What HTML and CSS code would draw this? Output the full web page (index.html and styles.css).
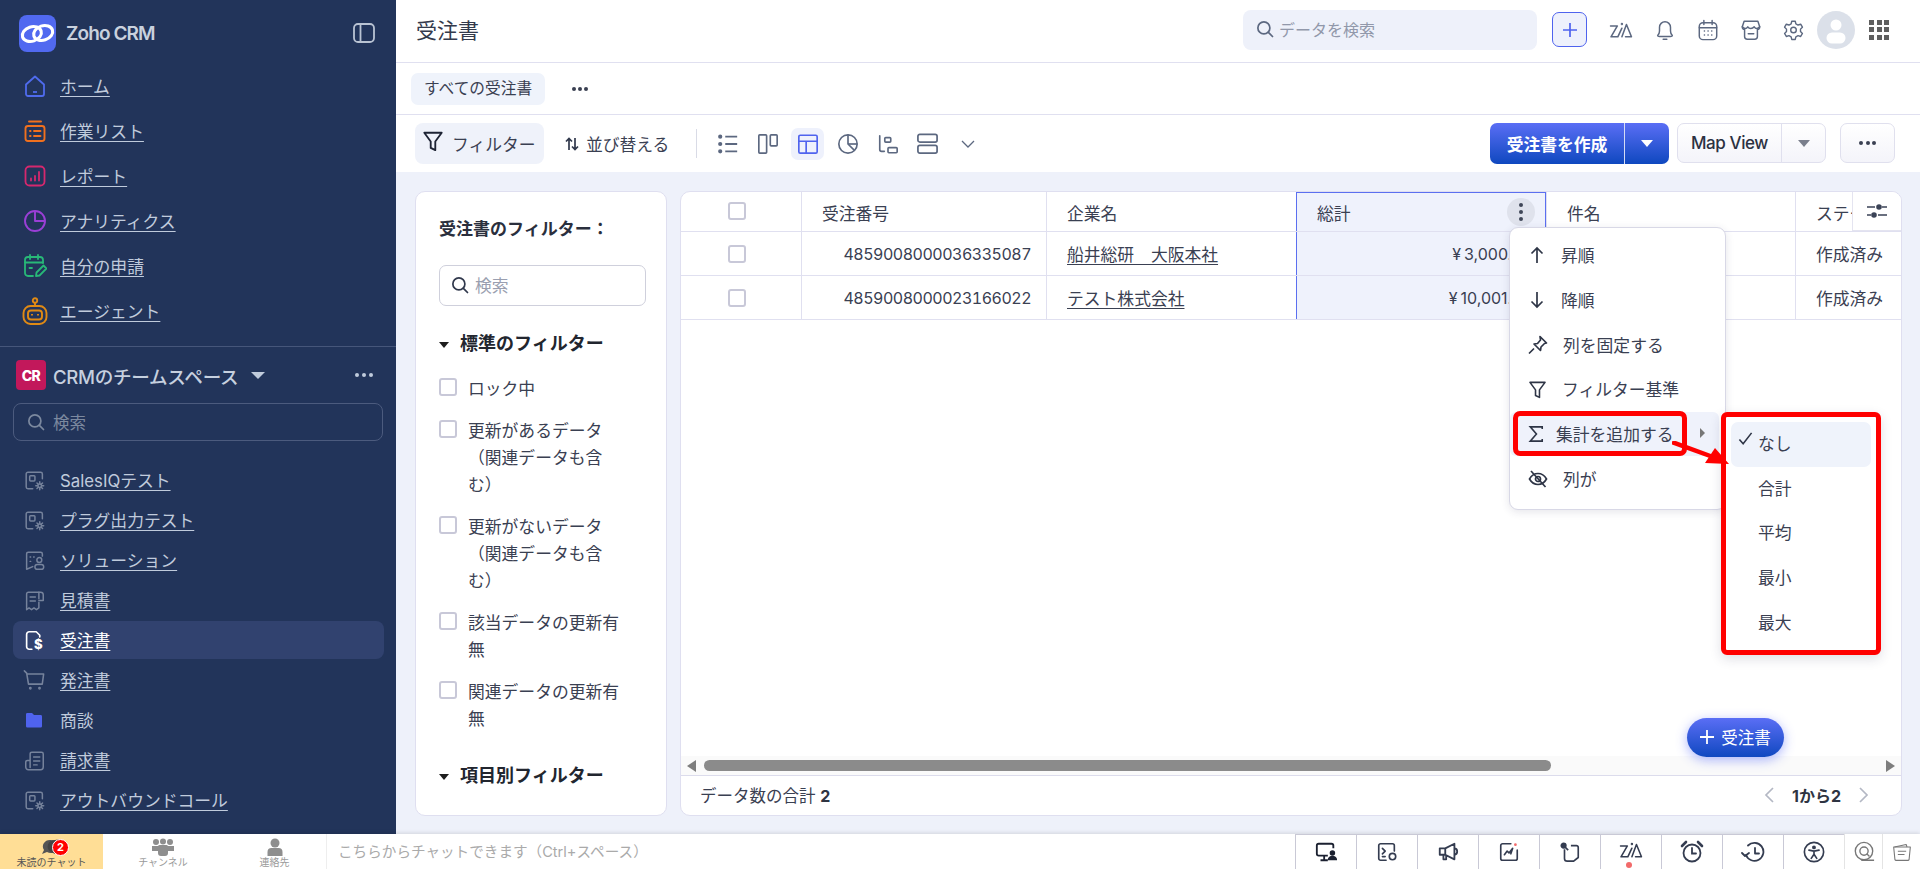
FILE: index.html
```html
<!DOCTYPE html>
<html lang="ja">
<head>
    <meta charset="UTF-8">
    <title>受注書 - Zoho CRM</title>
    <link rel="stylesheet" href="styles.css">
</head>
<body>
    <svg class="sprite" width="0" height="0">
        <symbol id="i-module" viewBox="0 0 24 24" fill="none" stroke="currentColor" stroke-width="1.7" stroke-linecap="round" stroke-linejoin="round">
            <path d="M10 21.5H4.5a2 2 0 0 1-2-2v-15a2 2 0 0 1 2-2h14.500a2 2 0 0 1 2 2V10"/>
            <rect x="6.500" y="6.500" width="6" height="6" rx="1"/>
            <circle cx="18" cy="18" r="2"/>
            <path d="M18 13.500v2M18 20.500v2M13.500 18h2M20.500 18h2M14.800 14.800l1.500 1.500M19.700 19.700l1.500 1.500M14.800 21.200l1.500-1.500M19.700 16.300l1.500-1.500"/>
        </symbol>
        <symbol id="i-search" viewBox="0 0 24 24" fill="none" stroke="currentColor" stroke-width="2.300" stroke-linecap="round">
            <circle cx="10.500" cy="10.500" r="8"/>
            <path d="M16.500 16.500L22 22"/>
        </symbol>
        <symbol id="i-funnel" viewBox="0 0 24 24" fill="none" stroke="currentColor" stroke-width="2" stroke-linejoin="round">
            <path d="M2.500 3h19l-7 9.500V22l-5-2.500v-7z"/>
        </symbol>
        <symbol id="i-zia" viewBox="0 0 26 22" fill="none" stroke="currentColor" stroke-width="1.700" stroke-linejoin="round" stroke-linecap="round">
            <path d="M1.500 6.500H9L2 18.500h7.500L14 9"/>
            <path d="M14 18.500L19 5l5.500 13.500H18"/>
            <circle cx="14" cy="4.500" r=".5"/>
        </symbol>
    </svg>

    <div class="app">
        <aside class="sidebar">
            <div class="brand">
                <span class="brand-logo">
                    <svg viewBox="0 0 36 36" width="37" height="37" fill="none" stroke="#fff" stroke-width="3">
                        <ellipse cx="12.500" cy="18.500" rx="9.500" ry="7" transform="rotate(-18 12.500 18.500)"/>
                        <ellipse cx="23.500" cy="17.500" rx="9.500" ry="7" transform="rotate(-18 23.500 17.500)"/>
                    </svg>
                </span>
                <span class="brand-name">Zoho CRM</span>
                <svg class="brand-toggle" viewBox="0 0 22 20" width="22" height="20" fill="none" stroke="#b9c3d3" stroke-width="1.800">
                    <rect x="1" y="1" width="20" height="18" rx="4"/>
                    <path d="M7.500 1v18"/>
                </svg>
            </div>

            <nav class="main-nav">
                <a class="nav-item"><span class="nav-icon">
                    <svg viewBox="0 0 24 24" width="24" height="24" fill="none" stroke="#4f6bed" stroke-width="1.800" stroke-linejoin="round"><path d="M3 10.500L12 2.500l9 8V20a2 2 0 0 1-2 2H5a2 2 0 0 1-2-2z"/><path d="M10 18h4"/></svg>
                </span>ホーム</a>
                <a class="nav-item"><span class="nav-icon">
                    <svg viewBox="0 0 24 24" width="24" height="24" fill="none" stroke="#f0701e" stroke-width="1.900" stroke-linecap="round"><path d="M6 2.500h12"/><rect x="2.500" y="7" width="19" height="15" rx="2.500"/><path d="M7 12h.6M11 12h6.500M7 17h.6M11 17h6.500"/></svg>
                </span>作業リスト</a>
                <a class="nav-item"><span class="nav-icon">
                    <svg viewBox="0 0 24 24" width="24" height="24" fill="none" stroke="#d6286e" stroke-width="1.800" stroke-linecap="round"><rect x="2.500" y="2.500" width="19" height="19" rx="4"/><path d="M8 16.500v-2M12 16.500v-4.500M16 16.500V8"/></svg>
                </span>レポート</a>
                <a class="nav-item"><span class="nav-icon">
                    <svg viewBox="0 0 24 24" width="24" height="24" fill="none" stroke="#9a3fd6" stroke-width="1.900" stroke-linejoin="round"><circle cx="12" cy="12" r="10"/><path d="M12 2v10h10"/></svg>
                </span>アナリティクス</a>
                <a class="nav-item"><span class="nav-icon">
                    <svg viewBox="0 0 24 24" width="24" height="24" fill="none" stroke="#28b878" stroke-width="1.800" stroke-linecap="round" stroke-linejoin="round"><path d="M10 22H5a3 3 0 0 1-3-3V6a3 3 0 0 1 3-3h12a3 3 0 0 1 3 3v3"/><path d="M2 8.500h18M7 1v4M15 1v4M6.500 14h2.500"/><path d="M13 22l.5-3.500 7-7 3 3-7 7z"/></svg>
                </span>自分の申請</a>
                <a class="nav-item"><span class="nav-icon">
                    <svg viewBox="0 0 26 28" width="26" height="28" fill="none" stroke="#e08a14" stroke-width="1.900"><circle cx="13" cy="3.500" r="2.200"/><path d="M13 6v3"/><rect x="1.500" y="9" width="23" height="18" rx="7"/><rect x="6" y="13.500" width="14" height="9" rx="3"/><path d="M10 17v1.500M16 17v1.500"/></svg>
                </span>エージェント</a>
            </nav>

            <div class="workspace">
                <span class="ws-badge">CR</span>
                <span class="ws-name">CRMのチームスペース</span>
                <span class="ws-caret"></span>
                <span class="ws-more"><i></i><i></i><i></i></span>
            </div>
            <div class="side-search">
                <svg width="18" height="18"><use href="#i-search"/></svg>
                <span>検索</span>
            </div>

            <nav class="module-nav">
                <a class="module-item"><span class="nav-icon"><svg width="21" height="21"><use href="#i-module"/></svg></span>SalesIQテスト</a>
                <a class="module-item"><span class="nav-icon"><svg width="21" height="21"><use href="#i-module"/></svg></span>プラグ出力テスト</a>
                <a class="module-item"><span class="nav-icon">
                    <svg viewBox="0 0 24 24" width="21" height="21" fill="none" stroke="currentColor" stroke-width="1.700" stroke-linecap="round" stroke-linejoin="round"><path d="M10 19l-7 3V4.500a2 2 0 0 1 2-2h14a2 2 0 0 1 2 2V7"/><path d="M7 8h.6M7 13h.6M11 8h.6"/><circle cx="17.500" cy="11.500" r="2.800"/><rect x="12.500" y="16.500" width="10" height="5.500" rx="2.700"/></svg>
                </span>ソリューション</a>
                <a class="module-item"><span class="nav-icon">
                    <svg viewBox="0 0 24 24" width="21" height="21" fill="none" stroke="currentColor" stroke-width="1.700" stroke-linecap="round" stroke-linejoin="round"><path d="M17 10V2.500H5a2 2 0 0 0-2 2v18l2.800-2 2.800 2 2.800-2 2.800 2 2.800-2V14"/><path d="M17 2.500h2a3 3 0 0 1 3 3V12h-5"/><path d="M7 8h6M7 12.500h6"/></svg>
                </span>見積書</a>
                <a class="module-item is-active"><span class="nav-icon">
                    <svg viewBox="0 0 24 24" width="21" height="21" fill="none" stroke="#fff" stroke-width="1.900" stroke-linecap="round" stroke-linejoin="round"><path d="M9 22H6a3 3 0 0 1-3-3V5a3 3 0 0 1 3-3h8l4 4v2"/><text class="dollar" x="11.500" y="22">$</text></svg>
                </span>受注書</a>
                <a class="module-item"><span class="nav-icon">
                    <svg viewBox="0 0 24 24" width="22" height="22" fill="none" stroke="currentColor" stroke-width="1.700" stroke-linecap="round" stroke-linejoin="round"><path d="M1.500 2L4 4.500 6 16.500h15l1.500-11H4.500"/><circle cx="8" cy="21" r=".7"/><circle cx="18" cy="21" r=".7"/></svg>
                </span>発注書</a>
                <a class="module-item is-plain"><span class="nav-icon">
                    <svg viewBox="0 0 20 18" width="18" height="16" fill="#4f63ee"><path d="M1 2.500A1.500 1.500 0 0 1 2.500 1h5.300l2.200 2.500h7.500A1.500 1.500 0 0 1 19 5v11a1.500 1.500 0 0 1-1.500 1.500h-15A1.500 1.500 0 0 1 1 16z"/></svg>
                </span>商談</a>
                <a class="module-item"><span class="nav-icon">
                    <svg viewBox="0 0 24 24" width="21" height="21" fill="none" stroke="currentColor" stroke-width="1.700" stroke-linecap="round" stroke-linejoin="round"><path d="M7 12V4.500a2 2 0 0 1 2-2h11a2 2 0 0 1 2 2v15a3 3 0 0 1-3 3H5a3 3 0 0 1-3-3V14a2 2 0 0 1 2-2h3v8"/><path d="M11 8h7M11 12.500h7M11 17h4"/></svg>
                </span>請求書</a>
                <a class="module-item"><span class="nav-icon"><svg width="21" height="21"><use href="#i-module"/></svg></span>アウトバウンドコール</a>
            </nav>
        </aside>

        <main class="main">
            <header class="topbar">
                <h1 class="page-title">受注書</h1>
                <div class="top-search">
                    <svg width="18" height="18"><use href="#i-search"/></svg>
                    <span>データを検索</span>
                </div>
                <button class="top-add">
                    <svg viewBox="0 0 16 16" width="16" height="16" stroke="#4f63ee" stroke-width="1.700"><path d="M8 1v14M1 8h14"/></svg>
                </button>
                <svg class="top-icon zia" width="24" height="20"><use href="#i-zia"/></svg>
                <svg class="top-icon" viewBox="0 0 24 24" width="22" height="24" fill="none" stroke="#5c6880" stroke-width="1.600" stroke-linecap="round" stroke-linejoin="round"><path d="M4 18c1.500-1.500 2-2.500 2-5V9a6 6 0 0 1 12 0v4c0 2.500.5 3.500 2 5 0 .5-1 1-2 1H6c-1 0-2-.5-2-1z"/><path d="M10 22h4"/></svg>
                <svg class="top-icon" viewBox="0 0 24 24" width="22" height="24" fill="none" stroke="#5c6880" stroke-width="1.600" stroke-linecap="round"><rect x="2.500" y="4" width="19" height="18.500" rx="4"/><path d="M2.500 9.500h19M7.500 1.500V6M16.500 1.500V6M8 13h.2M12 13h.2M16 13h.2M8 17.500h.2M12 17.500h.2M16 17.500h.2"/></svg>
                <svg class="top-icon" viewBox="0 0 24 24" width="22" height="24" fill="none" stroke="#5c6880" stroke-width="1.600" stroke-linecap="round" stroke-linejoin="round"><path d="M4.500 2.500h15l2 6c0 2-1.500 3-2.500 3v7.500a3 3 0 0 1-3 3H8a3 3 0 0 1-3-3v-7.500c-1 0-2.500-1-2.500-3z"/><path d="M2.500 8.500c2 2.500 4.500 2.500 6 0 1.500 2.500 5 2.500 7 0 1.500 2.500 4 2.500 6 0M9 16h6"/></svg>
                <svg class="top-icon" viewBox="0 0 24 24" width="21" height="24" fill="none" stroke="#5c6880" stroke-width="1.600" stroke-linejoin="round"><path d="M10 2h4l.7 3 2.500 1.300 3-.9 2 3.400-2.200 2.200v2.800l2.200 2.200-2 3.400-3-.9-2.500 1.300-.7 3h-4l-.7-3-2.500-1.300-3 .9-2-3.400 2.200-2.200v-2.800L1.800 8.800l2-3.400 3 .9L9.300 5z"/><circle cx="12" cy="12" r="3.200"/></svg>
                <span class="avatar">
                    <svg viewBox="0 0 38 38" width="38" height="38" fill="#fff"><circle cx="19" cy="14" r="5.500"/><rect x="9.500" y="21.500" width="19" height="11" rx="5.500"/></svg>
                </span>
                <span class="app-grid"><i></i><i></i><i></i><i></i><i></i><i></i><i></i><i></i><i></i></span>
            </header>

            <div class="tabs">
                <span class="tab-chip">すべての受注書</span>
                <span class="tab-more"><i></i><i></i><i></i></span>
            </div>

            <div class="toolbar">
                <button class="filter-btn">
                    <svg width="22" height="22" class="filter-funnel"><use href="#i-funnel"/></svg>
                    フィルター
                </button>
                <button class="sort-btn">
                    <svg viewBox="0 0 16 16" width="16" height="16" fill="none" stroke="#30384c" stroke-width="1.700"><path d="M5 14V3M2 5.500L5 2.500l3 3M11 2v11M8 10.500l3 3 3-3"/></svg>
                    並び替える
                </button>
                <span class="tool-divider"></span>
                <span class="view-icon">
                    <svg viewBox="0 0 24 24" width="22" height="22" fill="none" stroke="#5c6880" stroke-width="2"><path d="M9 4h13M9 12h13M9 20h13"/><circle cx="3.500" cy="4" r="1.300" fill="#5c6880"/><circle cx="3.500" cy="12" r="1.300" fill="#5c6880"/><circle cx="3.500" cy="20" r="1.300" fill="#5c6880"/></svg>
                </span>
                <span class="view-icon">
                    <svg viewBox="0 0 24 24" width="22" height="22" fill="none" stroke="#5c6880" stroke-width="1.800"><rect x="2" y="2" width="8.500" height="20" rx="1"/><rect x="14.500" y="2" width="7.500" height="12" rx="1"/></svg>
                </span>
                <span class="view-icon is-active">
                    <svg viewBox="0 0 24 24" width="22" height="22" fill="none" stroke="#4f63ee" stroke-width="1.800"><rect x="2" y="2.500" width="20" height="19.500" rx="1.500"/><path d="M2 9h20M10 9v13"/></svg>
                </span>
                <span class="view-icon">
                    <svg viewBox="0 0 24 24" width="22" height="22" fill="none" stroke="#5c6880" stroke-width="1.800"><circle cx="12" cy="12" r="10"/><path d="M12 2v10l7 7"/><path d="M12 12h10"/></svg>
                </span>
                <span class="view-icon">
                    <svg viewBox="0 0 24 24" width="22" height="22" fill="none" stroke="#5c6880" stroke-width="1.800" stroke-linecap="round"><path d="M3 3v15a2 2 0 0 0 2 2h3"/><rect x="8.500" y="5" width="6.500" height="5" rx="1"/><rect x="12" y="16" width="10" height="5.500" rx="1"/></svg>
                </span>
                <span class="view-icon">
                    <svg viewBox="0 0 24 24" width="23" height="23" fill="none" stroke="#5c6880" stroke-width="1.800"><rect x="2" y="2.500" width="20" height="8" rx="2"/><rect x="2" y="14" width="20" height="8" rx="2"/></svg>
                </span>
                <span class="view-icon">
                    <svg viewBox="0 0 16 16" width="16" height="16" fill="none" stroke="#5c6880" stroke-width="1.300"><path d="M2 5l6 6 6-6"/></svg>
                </span>

                <div class="tool-right">
                    <div class="create-btn">
                        <span class="create-label">受注書を作成</span>
                        <span class="create-caret"></span>
                    </div>
                    <div class="map-btn">
                        <span class="map-label">Map View</span>
                        <span class="map-caret"></span>
                    </div>
                    <button class="more-btn"><i></i><i></i><i></i></button>
                </div>
            </div>

            <div class="content">
                <section class="filter-panel">
                    <h2 class="filter-title">受注書のフィルター：</h2>
                    <div class="filter-search">
                        <svg width="18" height="18"><use href="#i-search"/></svg>
                        <span>検索</span>
                    </div>
                    <h3 class="filter-head">標準のフィルター</h3>
                    <label class="filter-item"><span class="check"></span><span class="filter-text">ロック中</span></label>
                    <label class="filter-item"><span class="check"></span><span class="filter-text">更新があるデータ（関連データも含む）</span></label>
                    <label class="filter-item"><span class="check"></span><span class="filter-text">更新がないデータ（関連データも含む）</span></label>
                    <label class="filter-item"><span class="check"></span><span class="filter-text">該当データの更新有無</span></label>
                    <label class="filter-item"><span class="check"></span><span class="filter-text">関連データの更新有無</span></label>
                    <h3 class="filter-head is-last">項目別フィルター</h3>
                </section>

                <section class="table-card">
                    <div class="row row-head">
                        <div class="cell cell-check"><span class="check"></span></div>
                        <div class="cell">受注番号</div>
                        <div class="cell">企業名</div>
                        <div class="cell cell-total cell-total-top">総計<span class="col-menu"><i></i><i></i><i></i></span></div>
                        <div class="cell">件名</div>
                        <div class="cell">ステータス</div>
                    </div>
                    <div class="row">
                        <div class="cell cell-check"><span class="check"></span></div>
                        <div class="cell cell-num">4859008000036335087</div>
                        <div class="cell"><a class="link">船井総研　大阪本社</a></div>
                        <div class="cell cell-total cell-money"><span class="yen">¥</span>3,000.00</div>
                        <div class="cell"></div>
                        <div class="cell">作成済み</div>
                    </div>
                    <div class="row">
                        <div class="cell cell-check"><span class="check"></span></div>
                        <div class="cell cell-num">4859008000023166022</div>
                        <div class="cell"><a class="link">テスト株式会社</a></div>
                        <div class="cell cell-total cell-total-end cell-money"><span class="yen">¥</span>10,001.00</div>
                        <div class="cell"></div>
                        <div class="cell">作成済み</div>
                    </div>
                    <div class="table-empty"></div>
                    <div class="h-scroll">
                        <span class="arrow-left"></span>
                        <span class="h-track"><span class="h-thumb"></span></span>
                        <span class="arrow-right"></span>
                    </div>
                    <div class="table-foot">
                        <span>データ数の合計 <b>2</b></span>
                        <span class="pager">
                            <svg viewBox="0 0 12 18" width="12" height="18" fill="none" stroke="#b4b8c4" stroke-width="1.700"><path d="M10 2L3 9l7 7"/></svg>
                            <b>1から2</b>
                            <svg viewBox="0 0 12 18" width="12" height="18" fill="none" stroke="#b4b8c4" stroke-width="1.700"><path d="M2 2l7 7-7 7"/></svg>
                        </span>
                    </div>
                    <button class="col-settings">
                        <svg viewBox="0 0 20 16" width="20" height="16" fill="none" stroke="#3a4256" stroke-width="1.600"><path d="M0 4h8M15 4h5M0 12h4M11 12h9"/><circle cx="12" cy="4" r="2" fill="#3a4256"/><circle cx="7" cy="12" r="2" fill="#3a4256"/></svg>
                    </button>
                    <button class="fab">
                        <svg viewBox="0 0 14 14" width="14" height="14" stroke="#fff" stroke-width="1.800"><path d="M7 0v14M0 7h14"/></svg>
                        受注書
                    </button>
                </section>
            </div>
        </main>
    </div>

    <footer class="chatbar">
        <div class="chat-tab is-unread">
            <svg viewBox="0 0 24 16" width="24" height="16" fill="#555"><path d="M10 1a7 6.500 0 0 0-6 10L2 15l5-2a7 6.500 0 1 0 3-12z"/><path d="M15 1a7 6.500 0 0 0-4 12l4 2 .5-2a7 6.500 0 1 0-.5-12z" fill="#444"/></svg>
            <span class="chat-count">2</span>
            未読のチャット
        </div>
        <div class="chat-tab is-channel">
            <svg viewBox="0 0 24 18" width="24" height="18" fill="#8e8e8e"><circle cx="5" cy="4" r="3"/><circle cx="12" cy="3.500" r="3"/><circle cx="19" cy="4" r="3"/><path d="M1 8h6v5H1zM17 8h6v5h-6z"/><path d="M7 8a2 2 0 0 1 2-1h6a2 2 0 0 1 2 1v7a3 3 0 0 1-3 3h-4a3 3 0 0 1-3-3z"/></svg>
            チャンネル
        </div>
        <div class="chat-tab">
            <svg viewBox="0 0 18 18" width="18" height="18" fill="#8e8e8e"><circle cx="9" cy="5" r="4.500"/><path d="M1.500 14a4 4 0 0 1 4-4h7a4 4 0 0 1 4 4v4h-15z"/></svg>
            連絡先
        </div>
        <div class="chat-input">こちらからチャットできます（Ctrl+スペース）</div>
        <div class="dock">
            <span class="dock-cell"><svg viewBox="0 0 24 24" width="22" height="22" fill="none" stroke="#1b2030" stroke-width="2"><path d="M14 16H4a2 2 0 0 1-2-2V5a2 2 0 0 1 2-2h14a2 2 0 0 1 2 2v3M10 16v5M6 21h8"/><circle cx="19" cy="13" r="2" fill="#1b2030"/><path d="M15 20a4 3 0 0 1 8 0z" fill="#1b2030"/></svg></span>
            <span class="dock-cell"><svg viewBox="0 0 24 24" width="22" height="22" fill="none" stroke="#343c50" stroke-width="1.800" stroke-linecap="round" stroke-linejoin="round"><path d="M11 21H5a2 2 0 0 1-2-2V5a2 2 0 0 1 2-2h13a2 2 0 0 1 2 2v6"/><path d="M7 8l3 3-3 3M7 17h3"/><circle cx="18" cy="17" r="3.500"/></svg></span>
            <span class="dock-cell"><svg viewBox="0 0 24 24" width="22" height="22" fill="none" stroke="#343c50" stroke-width="2" stroke-linejoin="round"><path d="M3 8h6l10-5v17L9 15H3zM9 8v7M7 15v5h3v-5M19 8c2 0 3 1.500 3 3.500s-1 3.500-3 3.500"/></svg></span>
            <span class="dock-cell"><svg viewBox="0 0 24 24" width="22" height="22" fill="none" stroke="#343c50" stroke-width="1.800" stroke-linecap="round" stroke-linejoin="round"><path d="M14 3H5a2 2 0 0 0-2 2v14a2 2 0 0 0 2 2h14a2 2 0 0 0 2-2v-9"/><path d="M7 15l3-4 2 2 4-5-2 6"/><circle cx="19" cy="4" r="1.500" fill="#f26a6a" stroke="none"/></svg></span>
            <span class="dock-cell"><svg viewBox="0 0 24 24" width="22" height="22" fill="none" stroke="#343c50" stroke-width="1.800" stroke-linejoin="round"><path d="M6 9v10a3 3 0 0 0 3 3h7l5-4V7a2 2 0 0 0-2-2h-6"/><path d="M5 5l5 5"/><circle cx="5" cy="5" r="2.500" fill="#343c50"/></svg></span>
            <span class="dock-cell dock-zia"><svg width="24" height="20"><use href="#i-zia"/></svg><i class="zia-dot"></i></span>
            <span class="dock-cell"><svg viewBox="0 0 24 24" width="24" height="24" fill="none" stroke="#343c50" stroke-width="1.800" stroke-linecap="round"><circle cx="12" cy="13" r="8.500"/><path d="M12 8v5.500h4"/><path d="M2 6l4-4M22 6l-4-4" stroke-width="2.600"/></svg></span>
            <span class="dock-cell"><svg viewBox="0 0 24 24" width="24" height="24" fill="none" stroke="#343c50" stroke-width="1.800" stroke-linecap="round" stroke-linejoin="round"><path d="M5 15a9 9 0 1 0 2-9.500"/><path d="M14 8v5.500h4"/><path d="M1 13l3 3 4-3"/></svg></span>
            <span class="dock-cell"><svg viewBox="0 0 24 24" width="22" height="22" fill="none" stroke="#343c50" stroke-width="1.800" stroke-linecap="round" stroke-linejoin="round"><circle cx="12" cy="12" r="10.500"/><circle cx="12" cy="7" r="1.200" fill="#343c50"/><path d="M6.500 10l5.500 1 5.500-1M12 11v3.500l-3 4.500M12 14.500l3 4.500"/></svg></span>
            <span class="dock-cell dock-light"><svg viewBox="0 0 24 24" width="22" height="22" fill="none" stroke="#777" stroke-width="1.500"><circle cx="12" cy="11" r="9.500"/><circle cx="12" cy="11" r="4.500"/><path d="M15 14l3 3M9 21h14"/></svg></span>
            <span class="dock-cell dock-light"><svg viewBox="0 0 24 24" width="20" height="20" fill="none" stroke="#777" stroke-width="1.300" stroke-linejoin="round"><path d="M3 6l14-3 1 3"/><path d="M2 6h20l-1.500 15a1.500 1.500 0 0 1-1.500 1H5a1.500 1.500 0 0 1-1.500-1z"/><path d="M7 11h10M7 15h8"/></svg></span>
        </div>
    </footer>

    <!-- dropdown del menu de columna -->
    <div class="col-dropdown">
        <div class="drop-item">
            <svg viewBox="0 0 18 18" width="18" height="18" fill="none" stroke="#2e3546" stroke-width="1.700"><path d="M9 17V2M3.500 7.500L9 2l5.500 5.500"/></svg>
            昇順
        </div>
        <div class="drop-item">
            <svg viewBox="0 0 18 18" width="18" height="18" fill="none" stroke="#2e3546" stroke-width="1.700"><path d="M9 1v15M3.500 10.500L9 16l5.500-5.500"/></svg>
            降順
        </div>
        <div class="drop-item">
            <svg viewBox="0 0 20 20" width="20" height="20" fill="none" stroke="#2e3546" stroke-width="1.700" stroke-linejoin="round"><path d="M12 1.500l6.500 6.500-2 .5-3.500 3.500-.5 3.500-6.500-6.500 3.500-.5 3-3.500zM6 13.500l-5 5"/></svg>
            列を固定する
        </div>
        <div class="drop-item">
            <svg width="19" height="19"><use href="#i-funnel"/></svg>
            フィルター基準
        </div>
        <div class="drop-item is-hover">
            <svg viewBox="0 0 18 20" width="16" height="20" fill="none" stroke="#2e3546" stroke-width="1.800"><path d="M16 4.500V2H2.500L9.500 10l-7 8H16v-2.500"/></svg>
            集計を追加する
            <span class="drop-arrow"></span>
        </div>
        <div class="drop-item">
            <svg viewBox="0 0 20 20" width="20" height="20" fill="none" stroke="#2e3546" stroke-width="1.700"><path d="M1.500 10c2-3.500 5-5.500 8.500-5.500s6.500 2 8.500 5.500c-2 3.500-5 5.500-8.500 5.500S3.500 13.500 1.500 10z"/><circle cx="10" cy="10" r="2.500"/><path d="M3 2l14.500 16"/></svg>
            列が
        </div>
    </div>

    <div class="sub-dropdown">
        <div class="sub-item is-selected">
            <svg viewBox="0 0 16 16" width="15" height="15" fill="none" stroke="#2e3546" stroke-width="1.700"><path d="M1.500 9l4 4.500L14.500 2"/></svg>
            なし
        </div>
        <div class="sub-item">合計</div>
        <div class="sub-item">平均</div>
        <div class="sub-item">最小</div>
        <div class="sub-item">最大</div>
    </div>

    <!-- anotaciones rojas encima del screenshot -->
    <div class="mark-row"></div>
    <svg class="mark-arrow" viewBox="0 0 60 26" width="60" height="26">
        <path d="M0 1l41 15" stroke="#f00" stroke-width="4.500" fill="none"/>
        <path d="M33 22l24 1-14-16z" fill="#f00"/>
    </svg>
</body>
</html>
```

FILE: styles.css
```css
* {
    box-sizing: border-box;
}

html, body {
    margin: 0;
    height: 100%;
    overflow: hidden;
}

body {
    display: flex;
    flex-direction: column;
    font-family: "Inter", "Noto Sans CJK JP", sans-serif;
    font-size: 16.5px;
    color: #3a4052;
    background: #fff;
}

button {
    font: inherit;
    color: inherit;
    background: none;
    border: none;
    padding: 0;
}

.sprite {
    position: absolute;
}

.app {
    flex: 1;
    display: flex;
    min-height: 0;
}

/* Sidebar */
.sidebar {
    width: 396px;
    flex: none;
    background: #22345a;
    color: #c0cbdc;
}

.brand {
    display: flex;
    align-items: center;
    height: 63px;
    padding: 3px 21px 0 19px;
}

.brand-logo {
    width: 37px;
    height: 37px;
    border-radius: 8px;
    background: #5169f0;
    display: flex;
}

.brand-name {
    margin-left: 10px;
    font-size: 19px;
    font-weight: 600;
    letter-spacing: -0.9px;
    color: #c9d1de;
    flex: 1;
}

.main-nav {
    padding-bottom: 13px;
    border-bottom: 1px solid #46567a;
}

.nav-item {
    display: flex;
    align-items: center;
    height: 45px;
    padding-left: 23px;
    text-decoration: underline;
    text-underline-offset: 3px;
    font-size: 16.8px;
}

.nav-icon {
    width: 24px;
    height: 28px;
    margin-right: 13px;
    display: flex;
    align-items: center;
    justify-content: center;
    flex: none;
}

.nav-icon svg {
    flex: none;
}

.workspace {
    display: flex;
    align-items: center;
    height: 30px;
    margin-top: 13px;
    padding: 0 23px 0 16px;
}

.ws-badge {
    width: 30px;
    height: 30px;
    border-radius: 4px;
    background: #c2185b;
    color: #fff;
    font-size: 14px;
    font-weight: 800;
    letter-spacing: -0.5px;
    display: flex;
    align-items: center;
    justify-content: center;
}

.ws-name {
    margin-left: 7px;
    font-size: 18.600px;
    letter-spacing: -0.3px;
    color: #c6d0df;
    font-weight: 500;
}

.ws-caret {
    margin-left: 13px;
    border-left: 7px solid transparent;
    border-right: 7px solid transparent;
    border-top: 7px solid #c0cbdc;
}

.ws-more {
    margin-left: auto;
    display: flex;
    gap: 3px;
}

.ws-more i, .tab-more i, .more-btn i {
    width: 4px;
    height: 4px;
    border-radius: 50%;
    background: #c0cbdc;
}

.side-search {
    display: flex;
    align-items: center;
    gap: 8px;
    height: 38px;
    margin: 13px 13px 0;
    padding-left: 13px;
    border: 1px solid #4c5b7e;
    border-radius: 8px;
    color: #7c899f;
}

.module-nav {
    margin: 20px 12px 0 13px;
}

.module-item {
    display: flex;
    align-items: center;
    height: 38px;
    margin-bottom: 2px;
    padding-left: 9px;
    border-radius: 8px;
    font-size: 16.8px;
    text-decoration: underline;
    text-underline-offset: 3px;
}

.module-item .nav-icon {
    margin-right: 14px;
    color: #76839c;
}

.module-item.is-active {
    background: #31426f;
    color: #fff;
}

.module-item.is-plain {
    text-decoration: none;
}

.dollar {
    font-size: 15px;
    font-weight: 800;
    fill: #fff;
    stroke: none;
}

/* Main */
.main {
    flex: 1;
    display: flex;
    flex-direction: column;
    min-width: 0;
}

.topbar {
    display: flex;
    align-items: center;
    height: 63px;
    flex: none;
    padding: 0 31px 3px 20px;
    border-bottom: 1px solid #e0e0f0;
}

.page-title {
    margin: 0 0 2px;
    font-size: 21px;
    font-weight: 400;
    color: #333a4c;
    flex: 1;
}

.top-search {
    display: flex;
    align-items: center;
    gap: 5px;
    width: 294px;
    height: 40px;
    padding: 0 0 2px 13px;
    border-radius: 8px;
    background: #eef1fa;
    color: #9198aa;
    font-size: 16px;
}

.top-search svg {
    color: #5c6880;
}

.top-add {
    width: 35px;
    height: 35px;
    margin-left: 15px;
    border: 1px solid #4f63ee;
    border-radius: 7px;
    background: #eef1fc;
    display: flex;
    align-items: center;
    justify-content: center;
}

.top-icon {
    margin-left: 21px;
    flex: none;
}

.top-icon.zia {
    margin-left: 22px;
    color: #5c6880;
}

.avatar {
    width: 38px;
    height: 38px;
    margin-left: 13px;
    border-radius: 50%;
    background: #dbe0e9;
    overflow: hidden;
    flex: none;
}

.app-grid {
    width: 20px;
    margin-left: 14px;
    display: grid;
    grid-template-columns: repeat(3, 5px);
    gap: 2.500px;
}

.app-grid i {
    height: 5px;
    background: #5f5f5f;
}

.tabs {
    display: flex;
    align-items: center;
    height: 52px;
    flex: none;
    padding-left: 15px;
    border-bottom: 1px solid #e0e0f0;
}

.tab-chip {
    display: flex;
    align-items: center;
    height: 32px;
    padding: 0 13px 3px;
    border-radius: 7px;
    background: #eff3fb;
    font-size: 15.700px;
}

.tab-more {
    margin-left: 27px;
    display: flex;
    gap: 2px;
}

.tab-more i {
    background: #3a4052;
}

.toolbar {
    display: flex;
    align-items: center;
    height: 57px;
    flex: none;
    padding: 0 25px 0 19px;
}

.filter-btn {
    display: flex;
    align-items: center;
    gap: 8px;
    width: 129px;
    height: 41px;
    padding: 0 0 0 7px;
    border-radius: 8px;
    background: #eff2fa;
    font-size: 16.8px;
}

.filter-funnel {
    margin-top: -6px;
    color: #1e2434;
}

.sort-btn {
    display: flex;
    align-items: center;
    gap: 6px;
    margin-left: 20px;
    font-size: 16.8px;
}

.tool-divider {
    width: 1px;
    height: 29px;
    margin: 0 14px 0 27px;
    background: #d9dbe6;
}

.view-icon {
    width: 33px;
    height: 32px;
    margin-right: 7px;
    border-radius: 7px;
    display: flex;
    align-items: center;
    justify-content: center;
}

.view-icon.is-active {
    background: #eef1fc;
}

.tool-right {
    margin-left: auto;
    display: flex;
    align-items: flex-start;
    gap: 8px;
}

.create-btn {
    display: flex;
    width: 179px;
    height: 41px;
    border-radius: 7px;
    background: linear-gradient(#5a6ef5, #0f48bf);
    color: #fff;
    font-weight: 700;
}

.create-label {
    width: 135px;
    display: flex;
    align-items: center;
    justify-content: center;
    border-right: 1px solid #d5dcf5;
    font-size: 16.8px;
}

.create-caret, .map-caret {
    margin: auto;
    border-left: 6px solid transparent;
    border-right: 6px solid transparent;
    border-top: 7px solid #fff;
}

.map-btn {
    display: flex;
    width: 149px;
    height: 40px;
    border: 1px solid #e0e0ee;
    border-radius: 7px;
    background: linear-gradient(#fff, #f4f4fa);
}

.map-label {
    width: 104px;
    display: flex;
    align-items: center;
    justify-content: center;
    border-right: 1px solid #e0e0ee;
    font-size: 17px;
    font-weight: 500;
    letter-spacing: -0.4px;
    color: #2c3242;
}

.map-caret {
    border-top-color: #7a7f8c;
}

.more-btn {
    width: 55px;
    height: 40px;
    margin-left: 6px;
    display: flex;
    align-items: center;
    justify-content: center;
    gap: 2.500px;
    border: 1px solid #e0e0ee;
    border-radius: 7px;
    background: linear-gradient(#fff, #f4f4fa);
}

.more-btn i {
    background: #3a4052;
}

.content {
    flex: 1;
    display: flex;
    gap: 13px;
    min-height: 0;
    padding: 19px 18px 18px 19px;
    background: #eef1fa;
}

/* Panel de filtros */
.filter-panel {
    width: 252px;
    flex: none;
    padding: 0 23px;
    border: 1px solid #dfdff0;
    border-radius: 10px;
    background: #fff;
}

.filter-title {
    margin: 25px 0 0;
    height: 24px;
    line-height: 24px;
    font-size: 17px;
    font-weight: 700;
    color: #2a2f3d;
}

.filter-search {
    display: flex;
    align-items: center;
    gap: 6px;
    width: 207px;
    height: 41px;
    margin-top: 24px;
    padding: 0 0 2px 11px;
    border: 1px solid #cfd0dc;
    border-radius: 7px;
    color: #9a9fb0;
    font-size: 16.800px;
}

.filter-search svg {
    color: #30384c;
}

.filter-head {
    position: relative;
    margin: 25px 0 19px;
    padding-left: 21px;
    font-size: 18px;
    line-height: 26px;
    font-weight: 700;
    color: #22262f;
}

.filter-head::before {
    content: "";
    position: absolute;
    left: 0;
    top: 11px;
    border-left: 5.500px solid transparent;
    border-right: 5.500px solid transparent;
    border-top: 6px solid #1e1e1e;
}

.filter-head.is-last {
    margin-top: 30px;
}

.filter-item {
    display: flex;
    align-items: flex-start;
    gap: 11px;
    margin-bottom: 15px;
}

.check {
    width: 18px;
    height: 18px;
    flex: none;
    display: block;
    border: 2px solid #c8c8d8;
    border-radius: 3px;
    background: #fff;
}

.filter-item .check {
    margin-top: 1.500px;
}

.filter-text {
    width: 156px;
    font-size: 16.800px;
    line-height: 27px;
}

/* Tabla */
.table-card {
    position: relative;
    flex: 1;
    min-width: 0;
    display: flex;
    flex-direction: column;
    border: 1px solid #dfdff0;
    border-radius: 10px;
    background: #fff;
    overflow: hidden;
}

.row {
    display: grid;
    grid-template-columns: 120px 245px 250px 250px 249px 1fr;
    height: 44px;
    flex: none;
    border-bottom: 1px solid #e0e0f0;
    overflow: hidden;
}

.row-head {
    height: 40px;
}

.cell {
    display: flex;
    align-items: center;
    padding-left: 20px;
    border-left: 1px solid #e0e0f0;
    white-space: nowrap;
    overflow: hidden;
    font-size: 16.800px;
}

.row-head .cell {
    padding-top: 3px;
}

.cell-check {
    border-left: none;
    padding-left: 47px;
}

.row-head .cell-check {
    padding-top: 0;
    padding-bottom: 1px;
}

.cell-num {
    justify-content: flex-end;
    padding-right: 15px;
    font-size: 16px;
    font-variant-numeric: tabular-nums;
    letter-spacing: -0.5px;
}

.link {
    text-decoration: underline;
    text-underline-offset: 3px;
}

.cell-total {
    position: relative;
    background: #eff2fc;
    border-left: 1px solid #5b6ff0;
    border-right: 1px solid #5b6ff0;
}

.cell-total-top {
    box-shadow: inset 0 1px 0 #5b6ff0;
}

.cell-total-end {
    box-shadow: inset 0 -1px 0 #5b6ff0;
    margin-bottom: -1px;
}

.cell-money {
    justify-content: flex-end;
    padding-right: 13px;
    font-size: 16px;
}

.yen {
    margin-right: 3px;
}

.col-menu {
    position: absolute;
    right: 10px;
    top: 6px;
    width: 28px;
    height: 28px;
    border-radius: 50%;
    background: #dfe2ec;
    display: flex;
    flex-direction: column;
    align-items: center;
    justify-content: center;
    gap: 3px;
}

.col-menu i {
    width: 4px;
    height: 4px;
    border-radius: 50%;
    background: #3f4658;
}

.table-empty {
    flex: 1;
}

.h-scroll {
    display: flex;
    align-items: center;
    height: 19px;
    flex: none;
    padding: 0 6px;
    background: #fafafa;
}

.arrow-left {
    border-top: 6px solid transparent;
    border-bottom: 6px solid transparent;
    border-right: 9px solid #7d7d7d;
}

.arrow-right {
    border-top: 6px solid transparent;
    border-bottom: 6px solid transparent;
    border-left: 9px solid #7d7d7d;
}

.h-track {
    flex: 1;
    padding: 0 8px;
}

.h-thumb {
    display: block;
    width: 847px;
    height: 11px;
    border-radius: 6px;
    background: #8b8b8b;
}

.table-foot {
    display: flex;
    align-items: center;
    justify-content: space-between;
    height: 40px;
    flex: none;
    padding: 0 31px 2px 19px;
    border-top: 1px solid #dcdcec;
    font-size: 16.500px;
}

.table-foot b {
    font-weight: 700;
    font-size: 16px;
    color: #2e3442;
}

.pager {
    display: flex;
    align-items: center;
    gap: 17px;
}

.col-settings {
    position: absolute;
    right: 0;
    top: 0;
    width: 49px;
    height: 39px;
    background: #fff;
    border-left: 1px solid #e4e4f0;
    border-bottom: 1px solid #e4e4f0;
    display: flex;
    align-items: center;
    justify-content: center;
}

.fab {
    position: absolute;
    left: 1006px;
    top: 526px;
    width: 97px;
    height: 39px;
    display: flex;
    align-items: center;
    justify-content: center;
    gap: 7px;
    padding-bottom: 2px;
    border-radius: 20px;
    background: linear-gradient(#5a6ef5, #1048c0);
    box-shadow: 0 3px 12px rgba(70, 90, 250, 0.45);
    color: #fff;
    font-size: 16.500px;
}

/* Barra de chat */
.chatbar {
    display: flex;
    height: 35px;
    flex: none;
    background: #fff;
    box-shadow: 0 -1px 4px rgba(0, 0, 0, 0.12);
    position: relative;
}

.chat-tab {
    position: relative;
    width: 103px;
    padding-top: 4px;
    display: flex;
    flex-direction: column;
    align-items: center;
    font-size: 10px;
    line-height: 12px;
    color: #9a9a9a;
    overflow: hidden;
}

.chat-tab.is-channel {
    width: 120px;
}

.chat-tab svg {
    height: 18px;
    flex: none;
}

.chat-tab.is-unread {
    background: #ffde96;
    color: #555;
}

.chat-count {
    position: absolute;
    left: 52px;
    top: 5px;
    width: 17px;
    height: 17px;
    border-radius: 50%;
    background: #f00;
    border: 1px solid #fff;
    color: #fff;
    font-size: 11px;
    font-weight: 700;
    line-height: 15px;
    text-align: center;
}

.chat-input {
    flex: 1;
    display: flex;
    align-items: center;
    padding: 0 0 2px 11px;
    border-left: 1px solid #eee;
    font-size: 14.600px;
    color: #aaa;
}

.dock {
    display: flex;
    margin-right: 0;
}

.dock-cell {
    position: relative;
    width: 61px;
    display: flex;
    align-items: center;
    justify-content: center;
    border-left: 1px solid #c9c9d6;
    border-top: 1px solid #c9c9d6;
}

.dock-light {
    width: 38px;
    border-top: none;
    border-left-color: #e4e4e4;
}

.dock-zia {
    color: #343c50;
}

.dock-zia svg {
    margin-top: -4px;
}

.zia-dot {
    position: absolute;
    left: 25px;
    bottom: 1px;
    width: 6px;
    height: 6px;
    border-radius: 50%;
    background: #f26a6a;
}

/* Menus flotantes */
.col-dropdown {
    position: absolute;
    left: 1509px;
    top: 227px;
    width: 217px;
    height: 283px;
    padding-top: 5px;
    border: 1px solid #d8d8e6;
    border-radius: 9px;
    background: #fff;
    box-shadow: 0 2px 8px rgba(40, 40, 80, 0.12);
}

.drop-item {
    position: relative;
    display: flex;
    align-items: center;
    gap: 15px;
    height: 44.700px;
    padding-left: 18px;
    font-size: 16.800px;
    color: #3a4052;
}

.drop-item svg {
    flex: none;
    color: #2e3546;
}

.drop-item.is-hover {
    gap: 12px;
    margin-right: 6px;
    border-radius: 6px;
    background: #eff2fb;
}

.drop-arrow {
    position: absolute;
    left: 190px;
    top: 16px;
    border-top: 5px solid transparent;
    border-bottom: 5px solid transparent;
    border-left: 5px solid #777;
}

.sub-dropdown {
    position: absolute;
    left: 1721px;
    top: 412px;
    width: 160px;
    height: 243px;
    padding: 5px;
    border: 5px solid #f00;
    border-radius: 6px;
    background: #fff;
    box-shadow: 0 4px 12px rgba(40, 40, 80, 0.15);
}

.sub-item {
    display: flex;
    align-items: center;
    height: 44.700px;
    padding: 0 0 3px 27px;
    font-size: 16.800px;
}

.sub-item.is-selected {
    position: relative;
    border-radius: 7px;
    background: #eff3fb;
}

.sub-item.is-selected svg {
    position: absolute;
    left: 7px;
    top: 9px;
}

.mark-row {
    position: absolute;
    left: 1513px;
    top: 411px;
    width: 174px;
    height: 45px;
    border: 5px solid #f00;
    border-radius: 7px;
}

.mark-arrow {
    position: absolute;
    left: 1672px;
    top: 441px;
}
```
